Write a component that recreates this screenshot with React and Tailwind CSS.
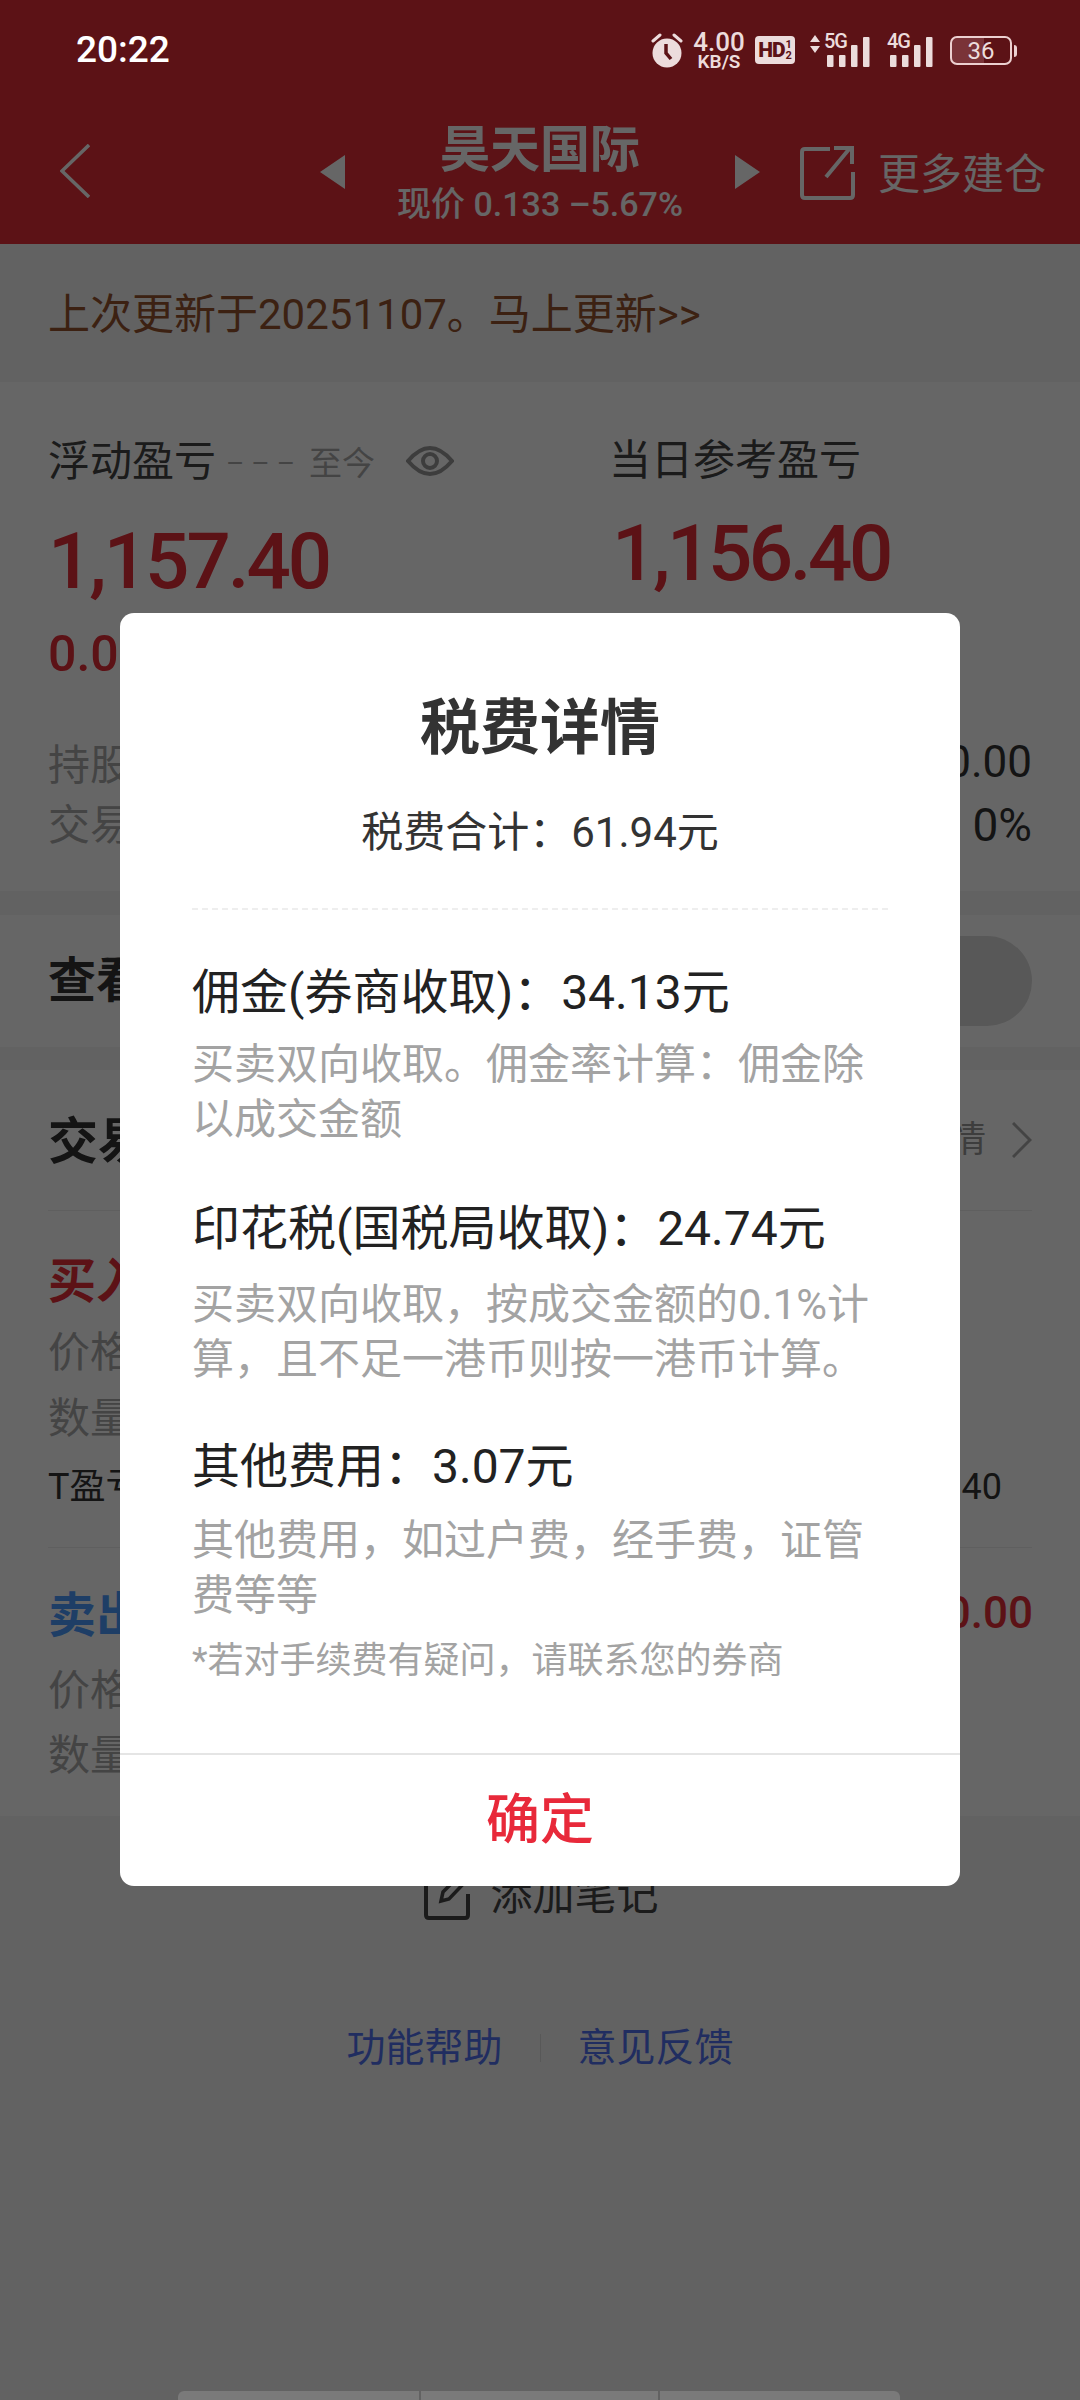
import React from 'react';

const FONT = { fontFamily: 'Roboto, "Noto Sans CJK SC", sans-serif' };

function SignalBars({ label, className }) {
  return (
    <div className={`relative h-[30px] w-[43px] ${className}`}>
      <svg width="43" height="30" viewBox="0 0 43 30" className="block">
        <rect x="0" y="18" width="6.5" height="12" rx="1" fill="#ecdcdc" />
        <rect x="12" y="18" width="6.5" height="12" rx="1" fill="#ecdcdc" />
        <rect x="24" y="8" width="6.5" height="22" rx="1" fill="#ecdcdc" />
        <rect x="36" y="0" width="6.5" height="30" rx="1" fill="#ecdcdc" />
      </svg>
      <span className="absolute left-[-3px] top-[-6px] text-[20px] leading-[20px] font-medium tracking-[-1px] text-[#ecdcdc]">{label}</span>
    </div>
  );
}

function StatusBar() {
  return (
    <div className="relative z-20 flex h-[100px] items-center">
      <span className="ml-[76px] w-[100px] text-[37px] leading-[36px] font-medium text-white">20:22</span>
      <svg width="32" height="36" viewBox="0 0 32 36" className="ml-[475px] mt-[2px]">
        <path d="M2 8 L9 2 M30 8 L23 2" stroke="#ecdcdc" strokeWidth="3" strokeLinecap="round" />
        <circle cx="16" cy="20" r="14.5" fill="#ecdcdc" />
        <path d="M15 11 L15 20 L20 26" stroke="#5c1216" strokeWidth="3.5" fill="none" />
      </svg>
      <div className="ml-[10px] flex w-[52px] flex-col items-center text-[#ecdcdc]">
        <span className="text-[26px] leading-[22px] font-medium">4.00</span>
        <span className="text-[19px] leading-[17px] font-semibold">KB/S</span>
      </div>
      <div className="ml-[10px] flex h-[28px] w-[40px] items-center justify-center rounded-[4px] bg-[#ecdcdc] text-[#5c1216]">
        <span className="text-[21px] leading-[21px] font-black tracking-[-1px]">HD</span>
        <span className="ml-[1px] flex flex-col items-center text-[11px] leading-[11px] font-bold">
          <span>1</span>
          <span>2</span>
        </span>
      </div>
      <svg width="10" height="20" viewBox="0 0 10 20" className="ml-[15px] mb-[12px]">
        <path d="M5 1 L10 8 L0 8 Z M5 19 L10 12 L0 12 Z" fill="#ecdcdc" />
      </svg>
      <SignalBars label="5G" className="ml-[7px] mt-[4px]" />
      <SignalBars label="4G" className="ml-[20px] mt-[4px]" />
      <div className="ml-[17px] mt-[1px] flex h-[29px] w-[62px] items-center justify-center rounded-[7px] border-[2px] border-[#ecd0d0] bg-[linear-gradient(90deg,#7a3338_0_55%,transparent_55%)] bg-[length:100%_100%]">
        <span className="text-[24px] leading-[24px] text-[#ecdcdc]">36</span>
      </div>
      <div className="ml-[2px] mt-[1px] h-[12px] w-[3px] rounded-r bg-[#ecd0d0]" />
    </div>
  );
}

function NavBar() {
  return (
    <div className="flex h-[144px] items-center text-white">
      <svg width="30" height="54" viewBox="0 0 30 54" className="ml-[60px] mt-[-2px]">
        <path d="M29 1 L2 27 L29 53" stroke="#fff" strokeWidth="3.5" fill="none" />
      </svg>
      <svg width="25" height="34" viewBox="0 0 25 34" className="ml-[230px]">
        <path d="M25 0 L25 34 L0 17 Z" fill="#fff" />
      </svg>
      <div className="flex w-[390px] flex-col items-center">
        <span className="text-[50px] leading-[56px] font-semibold mt-[2px]">昊天国际</span>
        <span className="text-[34px] leading-[40px] font-medium mt-[6px]">现价 0.133 –5.67%</span>
      </div>
      <svg width="25" height="34" viewBox="0 0 25 34">
        <path d="M0 0 L0 34 L25 17 Z" fill="#fff" />
      </svg>
      <svg width="56" height="56" viewBox="0 0 56 56" className="ml-[40px] mt-[2px]">
        <path d="M30 4 L5 4 Q2 4 2 7 L2 50 Q2 53 5 53 L50 53 Q53 53 53 50 L53 27" stroke="#fff" strokeWidth="4" fill="none" />
        <path d="M26 32 L50 3 M34 3 L52 3 L52 19" stroke="#fff" strokeWidth="4" fill="none" />
      </svg>
      <span className="ml-[22px] mt-[6px] text-[42px] leading-[50px]">更多建仓</span>
    </div>
  );
}

function Eye() {
  return (
    <svg width="48" height="34" viewBox="0 0 48 34" className="ml-[31px]">
      <path d="M2 17 Q24 -9 46 17 Q24 43 2 17 Z" stroke="#999" strokeWidth="4" fill="none" />
      <circle cx="24" cy="17" r="7" stroke="#999" strokeWidth="4" fill="none" />
    </svg>
  );
}

function Overview() {
  return (
    <div className="bg-white pl-[48px] pr-[48px] pb-[36px] pt-[53px]">
      <div className="flex">
        <div className="w-[564px]">
          <div className="flex h-[52px] items-center">
            <span className="text-[42px] text-[#444]">浮动盈亏</span>
            <span className="ml-[10px] mt-[6px] flex items-center text-[33px] text-[#aaa]">
              <span className="text-[28px]">– – –</span>
              <span className="ml-[14px]">至今</span>
            </span>
            <Eye />
          </div>
          <div className="mt-[35px] h-[80px] text-[78px] leading-[80px] font-medium tracking-[-3px] text-[#e62d37]">1,157.40</div>
        </div>
        <div>
          <div className="ml-[-3px] h-[52px] text-[42px] leading-[52px] text-[#444]">当日参考盈亏</div>
          <div className="mt-[27px] h-[80px] text-[78px] leading-[80px] font-medium tracking-[-3.4px] text-[#e62d37]">1,156.40</div>
        </div>
      </div>
      <div className="mt-[26px] h-[52px] text-[50px] leading-[52px] font-medium text-[#e62d37]">0.00%</div>
      <div className="mt-[55px] flex h-[60px] items-center justify-between text-[42px] text-[#aaa]">
        <span>持股</span>
        <span className="mt-[-6px] text-[44px] text-[#333]">100.00</span>
      </div>
      <div className="flex h-[60px] items-center justify-between text-[42px] text-[#aaa]">
        <span>交易</span>
        <span className="text-[46px] text-[#333]">0%</span>
      </div>
    </div>
  );
}

function Trades() {
  return (
    <div className="mt-[23px] bg-white px-[48px] h-[746px]">
      <div className="flex h-[141px] items-center justify-between border-b border-[#eee]">
        <span className="mt-[4px] text-[50px] font-bold text-[#333]">交易</span>
        <div className="flex items-center">
          <span className="text-[36px] text-[#999]">详情</span>
          <svg width="20" height="36" viewBox="0 0 20 36" className="ml-[26px]">
            <path d="M1 1 L18 18 L1 35" stroke="#aaa" strokeWidth="3" fill="none" />
          </svg>
        </div>
      </div>
      <div className="mt-[41px] h-[60px] text-[48px] leading-[60px] font-semibold text-[#e62d37]">买入</div>
      <div className="mt-[9px] h-[64px] text-[42px] leading-[64px] text-[#aaa]">价格</div>
      <div className="h-[67px] text-[42px] leading-[67px] text-[#aaa]">数量</div>
      <div className="mt-[15px] flex h-[40px] items-center justify-between pr-[30px] text-[36px] text-[#333]">
        <span>T盈亏</span>
        <span>1,156.40</span>
      </div>
      <div className="mt-[40px] flex h-[98px] items-start justify-between border-t border-[#eee] pt-[38px] text-[#e62d37]">
        <span className="text-[48px] leading-[60px] font-semibold text-[#4d9cff]">卖出</span>
        <span className="mt-[-3px] text-[44px] leading-[60px] font-medium mr-[-1px]">100.00</span>
      </div>
      <div className="mt-[14px] h-[64px] text-[42px] leading-[64px] text-[#aaa]">价格</div>
      <div className="mt-[2px] h-[62px] text-[42px] leading-[62px] text-[#aaa]">数量</div>
    </div>
  );
}

function BottomLinks() {
  return (
    <>
      <div className="mt-[49px] flex h-[60px] items-center justify-center">
        <svg width="46" height="50" viewBox="0 0 46 50" className="mr-[20px] ml-[3px]">
          <path d="M24 5 L5 5 Q2 5 2 8 L2 45 Q2 48 5 48 L41 48 Q44 48 44 45 L44 24" stroke="#444" strokeWidth="4" fill="none" />
          <path d="M17 31 L19 22 L38 3 L44 9 L25 29 Z" stroke="#444" strokeWidth="3.5" fill="none" />
        </svg>
        <span className="text-[42px] text-[#444]">添加笔记</span>
      </div>
      <div className="mt-[93px] flex h-[60px] items-center justify-center text-[39px] text-[#5272f0]">
        <span>功能帮助</span>
        <div className="mx-[37px] h-[28px] w-px bg-[#ddd]" />
        <span>意见反馈</span>
      </div>
    </>
  );
}

const FEES = [
  {
    title: '佣金(券商收取)\uFF1A34.13元',
    desc: '买卖双向收取。佣金率计算\uFF1A佣金除以成交金额',
    titleClass: 'mt-[53px]',
    descClass: 'mt-[14px]',
  },
  {
    title: '印花税(国税局收取)\uFF1A24.74元',
    desc: '买卖双向收取\uFF0C按成交金额的0.1%计算\uFF0C且不足一港币则按一港币计算。',
    titleClass: 'mt-[52px]',
    descClass: 'mt-[18px]',
  },
  {
    title: '其他费用\uFF1A3.07元',
    desc: '其他费用\uFF0C如过户费\uFF0C经手费\uFF0C证管费等等',
    titleClass: 'mt-[50px]',
    descClass: 'mt-[16px]',
  },
];

function TaxModal() {
  return (
    <div className="absolute left-[120px] top-[613px] z-20 flex h-[1273px] w-[840px] flex-col rounded-[14px] bg-white">
      <div className="px-[72px] pt-[86px]">
        <div className="h-[60px] text-center text-[60px] leading-[60px] font-semibold text-[#333]">税费详情</div>
        <div className="mt-[46px] h-[56px] text-center text-[42px] leading-[56px] text-[#333]">{'税费合计\uFF1A61.94元'}</div>
        <div className="mt-[47px] border-t-[2px] border-dashed border-[#eee]" />
        {FEES.map((fee) => (
          <div key={fee.title}>
            <div className={`${fee.titleClass} h-[60px] text-[48px] leading-[60px] text-[#222]`}>{fee.title}</div>
            <p className={`${fee.descClass} text-[42px] leading-[55px] text-[#a3a3a3]`}>{fee.desc}</p>
          </div>
        ))}
        <p className="mt-[13px] h-[50px] text-[36px] leading-[50px] text-[#a3a3a3]">{'*若对手续费有疑问\uFF0C请联系您的券商'}</p>
      </div>
      <div className="mt-auto flex h-[133px] items-center justify-center border-t-[2px] border-[#e5e5e5]">
        <span className="text-[54px] font-medium text-[#e8293a]">确定</span>
      </div>
    </div>
  );
}

export default function App() {
  return (
    <div style={FONT} className="relative h-[2400px] w-[1080px] overflow-hidden bg-[#f5f5f5]">
      <div className="bg-[#e62d37]">
        <StatusBar />
        <NavBar />
      </div>
      <div className="flex h-[138px] items-center pl-[48px] pt-[3px] text-[42px] text-[#96532f]">上次更新于20251107。马上更新&gt;&gt;</div>
      <Overview />
      <div className="mt-[24px] flex h-[132px] items-center justify-between bg-white pl-[48px] pr-[48px]">
        <span className="text-[48px] font-bold text-[#333]">查看</span>
        <div className="h-[90px] w-[170px] rounded-full bg-[#dcdcdc]" />
      </div>
      <Trades />
      <BottomLinks />

      <div className="absolute inset-0 z-10 bg-black/60" />
      <TaxModal />
      <div className="absolute bottom-0 left-[178px] z-20 flex h-[9px] w-[722px] gap-[2px] overflow-hidden rounded-t-[6px]">
        <div className="w-[241px] bg-[#7a7a7a]" />
        <div className="w-[237px] bg-[#7a7a7a]" />
        <div className="flex-1 bg-[#7a7a7a]" />
      </div>
    </div>
  );
}
